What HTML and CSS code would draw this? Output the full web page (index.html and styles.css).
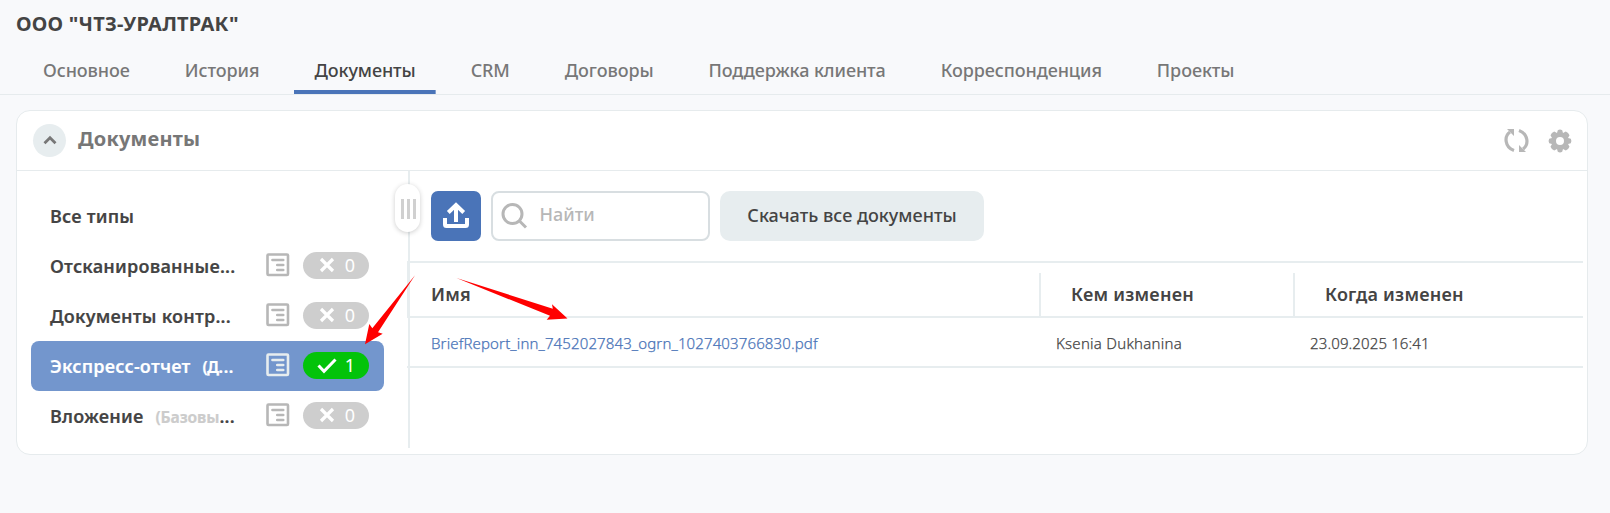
FILE: index.html
```html
<!DOCTYPE html>
<html lang="ru">
<head>
<meta charset="utf-8">
<title>ООО "ЧТЗ-УРАЛТРАК"</title>
<link rel="stylesheet" href="styles.css">
</head>
<body>
<svg class="sprite" aria-hidden="true">
  <symbol id="list" viewBox="0 0 24 24">
    <rect x="1.5" y="1.5" width="20.5" height="20.5" rx="1" fill="none" stroke="currentColor" stroke-width="2.6"/>
    <path d="M6.5 7H17.2M11.3 12H17.2M11.3 17H17.2" fill="none" stroke="currentColor" stroke-width="2.7" stroke-linecap="round"/>
  </symbol>
  <symbol id="cross" viewBox="0 0 20 20">
    <path d="M4 4L16 16M16 4L4 16" fill="none" stroke="currentColor" stroke-width="3.2"/>
  </symbol>
  <symbol id="check" viewBox="0 0 20 20">
    <path d="M1.5 10.5L7 16.3L18.5 4.5" fill="none" stroke="currentColor" stroke-width="3"/>
  </symbol>
</svg>
<header class="page-title">ООО "ЧТЗ-УРАЛТРАК"</header>
<nav class="tabs">
  <a class="tab">Основное</a>
  <a class="tab">История</a>
  <a class="tab tab-active">Документы</a>
  <a class="tab">CRM</a>
  <a class="tab">Договоры</a>
  <a class="tab">Поддержка клиента</a>
  <a class="tab">Корреспонденция</a>
  <a class="tab">Проекты</a>
</nav>
<main class="card">
  <div class="card-head">
    <button class="collapse"><svg width="33" height="33" viewBox="0 0 33 33"><path d="M11.5 19.3L17 13.8L22.5 19.3" fill="none" stroke="#777" stroke-width="2.8"/></svg></button>
    <h2 class="card-title">Документы</h2>
    <svg class="refresh" width="25" height="25" viewBox="0 0 25 25" fill="none" stroke="#b7b7b7" stroke-width="3.2">
      <path d="M10 22.5C0.500 19 0 8 6 4M15 2.500C24.500 6 25 17 19 21"/>
      <path d="M3 1H10V8zM22 24H15V17z" fill="#b7b7b7" stroke="none"/>
    </svg>
    <svg class="gear" width="24" height="24" viewBox="0 0 24 24">
      <path fill="#b7b7b7" fill-rule="evenodd" d="M9.8 1.2Q12 0 14.2 1.2L15 4L17.8 2.5Q20.5 3.500 21.500 6.200L20 9L22.800 9.800Q24 12 22.800 14.200L20 15L21.500 17.800Q20.500 20.500 17.800 21.500L15 20L14.200 22.800Q12 24 9.800 22.800L9 20L6.200 21.500Q3.500 20.500 2.500 17.800L4 15L1.200 14.200Q0 12 1.200 9.800L4 9L2.500 6.200Q3.500 3.500 6.200 2.500L9 4ZM12 8A4 4 0 1 0 12 16A4 4 0 1 0 12 8Z"/>
    </svg>
  </div>
  <div class="card-body">
    <aside class="types">
      <div class="type"><span class="type-name">Все типы</span></div>
      <div class="type"><span class="type-name">Отсканированные...</span><svg class="list-icon"><use href="#list"/></svg><span class="badge"><svg class="mark"><use href="#cross"/></svg>0</span></div>
      <div class="type"><span class="type-name">Документы контр...</span><svg class="list-icon"><use href="#list"/></svg><span class="badge"><svg class="mark"><use href="#cross"/></svg>0</span></div>
      <div class="type type-selected"><span class="type-name">Экспресс-отчет<small class="hint">(Д</small>...</span><svg class="list-icon"><use href="#list"/></svg><span class="badge badge-ok"><svg class="mark"><use href="#check"/></svg>1</span></div>
      <div class="type"><span class="type-name">Вложение<small class="hint">(Базовы</small>...</span><svg class="list-icon"><use href="#list"/></svg><span class="badge"><svg class="mark"><use href="#cross"/></svg>0</span></div>
    </aside>
    <div class="splitter"><span class="grip"><i></i><i></i><i></i></span></div>
    <section class="content">
      <div class="toolbar">
        <button class="upload"><svg width="50" height="50" viewBox="0 0 50 50" fill="none" stroke="#fff" stroke-width="4"><path d="M14 27V33.500Q14 35 15.500 35H34.500Q36 35 36 33.500V27M25 31V14.500M17.300 21.500L25 14L32.700 21.500"/></svg></button>
        <div class="search"><svg width="28" height="28" viewBox="0 0 28 28" fill="none" stroke="#b7b7b7" stroke-width="3"><circle cx="12.500" cy="12" r="9.500"/><path d="M19 18.500L26 25.500"/></svg><span class="placeholder">Найти</span></div>
        <button class="download"><span>Скачать все документы</span></button>
      </div>
      <div class="grid grid-head">
        <div class="th">Имя</div>
        <div class="th">Кем изменен</div>
        <div class="th">Когда изменен</div>
      </div>
      <div class="grid grid-row">
        <div class="td"><a class="file">BriefReport_inn_7452027843_ogrn_1027403766830.pdf</a></div>
        <div class="td who">Ksenia Dukhanina</div>
        <div class="td">23.09.2025 16:41</div>
      </div>
    </section>
  </div>
</main>
<svg class="arrows" width="1610" height="513" viewBox="0 0 1610 513" fill="#f00">
  <path d="M415 275.300L378 332.300L382.700 333.700L365 344.300L369.300 324L372.300 328.200Z"/>
  <path d="M456.500 278L552.800 308.800L552 304.200L567.500 318.500L546.700 319.700L550 315.800Z"/>
</svg>
</body>
</html>
```

FILE: styles.css
```css
* { box-sizing: border-box; }
body {
  margin: 0;
  height: 513px;
  overflow: hidden;
  background: #f8f9fb;
  color: #444;
  font-family: "Noto Sans", "Open Sans", sans-serif;
  font-size: 18px;
  white-space: nowrap;
}
button { border: 0; padding: 0; font: inherit; color: inherit; }
svg { display: block; flex: none; }
.sprite { position: absolute; width: 0; height: 0; }
.page-title { height: 48px; padding-left: 16px; font-size: 20px; font-weight: 700; line-height: 47px; letter-spacing: .23px; }
.tabs {
  display: flex;
  gap: 15px;
  height: 47px;
  padding-left: 23px;
  border-bottom: 1px solid #e6ebed;
}
.tab { height: 46px; padding: 0 20px; line-height: 45px; font-weight: 500; letter-spacing: -.08px; color: #777; }
.tab-active { color: #444; background: #4a74b8; background: linear-gradient(#4a74b8, #4a74b8) bottom / 100% 4px no-repeat; }
.card {
  width: 1572px;
  height: 345px;
  margin: 15px 0 0 16px;
  border: 1px solid #e6ebed;
  border-radius: 14px;
  background: #fff;
}
.card-head { display: flex; align-items: center; height: 60px; padding: 0 15px 0 16px; border-bottom: 1px solid #e6ebed; }
.collapse { width: 33px; height: 33px; border-radius: 50%; background: #e7edef; }
.card-title { margin: -5px auto 0 12px; font-size: 20px; font-weight: 700; letter-spacing: .22px; color: #777; }
.refresh { margin-right: 19px; }
.card-body { display: flex; height: 277px; }
.types { width: 391px; padding: 20px 24px 0 14px; }
.type { display: flex; align-items: center; height: 50px; padding: 0 15px 0 19px; border-radius: 8px; }
.type-selected { background: #7396cd; color: #fff; }
.type-name { width: 216px; font-weight: 600; letter-spacing: .2px; -webkit-text-stroke: .15px; }
.hint { margin-left: 12px; font-size: 15.500px; font-weight: 700; letter-spacing: -.1px; color: #ccc; }
.type-selected .hint { color: #fff; letter-spacing: -.8px; }
.list-icon { width: 24px; height: 24px; margin-bottom: 2px; color: #b7b7b7; }
.type-selected .list-icon { color: #e7edef; }
.badge {
  display: flex;
  align-items: center;
  justify-content: flex-end;
  gap: 8px;
  width: 66px;
  height: 27px;
  margin: 0 0 2px 13px;
  padding-right: 14px;
  border-radius: 14px;
  background: #cecece;
  color: #fff;
}
.badge-ok { background: #03c30a; }
.mark { width: 20px; height: 20px; }
.splitter { display: flex; justify-content: center; width: 2px; background: #e7edef; }
.grip {
  display: flex;
  flex: none;
  align-items: center;
  justify-content: center;
  gap: 3px;
  width: 25px;
  height: 48px;
  margin: 13px 0 0 -3px;
  padding-left: 1px;
  border-radius: 13px;
  background: #fff;
  box-shadow: 0 1px 5px #0003;
  z-index: 1;
}
.grip i { width: 3px; height: 20px; margin-top: 1px; background: #d0d0d0; }
.content { width: 1176px; margin-left: -3px; }
.toolbar { display: flex; gap: 10px; height: 90px; padding: 20px 0 0 24px; }
.upload { width: 50px; height: 50px; border-radius: 7px; background: #4a74b8; }
.search { display: flex; align-items: center; width: 219px; height: 50px; padding-left: 7px; border: 2px solid #d8dee1; border-radius: 8px; }
.placeholder { margin: -5px 0 0 11.500px; color: #b7b7b7; font-weight: 500; }
.download { width: 264px; height: 50px; padding-bottom: 2px; border-radius: 10px; background: #e7edef; font-weight: 500; }
.grid { display: grid; grid-template-columns: 632px 254px 290px; border-bottom: 2px solid #e7edef; }
.grid-head {
  grid-template-columns: 630px 254px 290px;
  height: 57px;
  padding-top: 10px;
  border-top: 2px solid #e7edef;
  border-left: 2px solid #e7edef;
  font-weight: 600;
  letter-spacing: .24px;
}
.th { padding-left: 30px; line-height: 43px; border-left: 2px solid #e7edef; }
.th:first-child { padding-left: 22px; border-left: 0; }
.grid-row { height: 50px; font-size: 15px; font-weight: 300; line-height: 50px; letter-spacing: .13px; -webkit-text-stroke: .25px; }
.td { padding-left: 17px; }
.td:first-child { padding-left: 24px; }
.who { letter-spacing: .25px; }
.file { color: #4a74b8; }
.arrows { position: absolute; top: 0; left: 0; z-index: 2; }
```
